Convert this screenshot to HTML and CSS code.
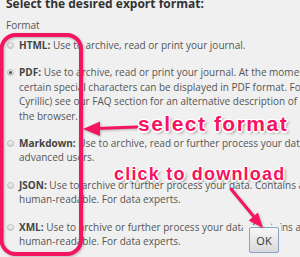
FILE: index.html
```html
<!DOCTYPE html>
<html lang="en">

<head>
      <meta charset="UTF-8">
      <meta name="viewport" content="width=device-width, initial-scale=1.0">
      <title>Export</title>
      <link rel="stylesheet" href="styles.css">
</head>

<body>
      <div id="dialog">
            <h2 class="title">Select the desired export format:</h2>
            <p class="label">Format</p>
            <div class="option">
                  <span class="radio"></span>
                  <p class="desc"><b>HTML:</b> Use to archive, read or print your journal.</p>
            </div>
            <div class="option">
                  <span class="radio checked"></span>
                  <p class="desc"><b>PDF:</b> Use to archive, read or print your journal. At the moment not all<br>
                        certain special characters can be displayed in PDF format. For these (e.g.<br>
                        Cyrillic) see our FAQ section for an alternative description of printing from<br>
                        the browser.</p>
            </div>
            <div class="option">
                  <span class="radio"></span>
                  <p class="desc"><b>Markdown:</b> Use to archive, read or further process your data. For<br>
                        advanced users.</p>
            </div>
            <div class="option">
                  <span class="radio"></span>
                  <p class="desc"><b>JSON:</b> Use to archive or further process your data. Contains all data, not<br>
                        human-readable. For data experts.</p>
            </div>
            <div class="option">
                  <span class="radio"></span>
                  <p class="desc"><b>XML:</b> Use to archive or further process your data. Contains all data, not<br>
                        human-readable. For data experts.</p>
            </div>
      </div>

      <div class="button-pane">
            <button class="ok">OK</button>
      </div>

      <!-- annotations drawn on top of the screenshot -->
      <svg class="marks" width="300" height="257" viewBox="0 0 300 257">
            <rect x="1.5" y="35" width="79.5" height="219" rx="14" ry="14" fill="none" stroke="#f5145f" stroke-width="4"/>
            <line x1="137" y1="127" x2="96" y2="128.5" stroke="#f5145f" stroke-width="3" stroke-linecap="round"/>
            <polygon points="83,129 100,121.5 100,136" fill="#f5145f"/>
            <line x1="231" y1="189" x2="255" y2="218" stroke="#f5145f" stroke-width="3" stroke-linecap="round"/>
            <polygon points="263,228 248.7,220.4 257.9,212.6" fill="#f5145f"/>
      </svg>
      <div class="note note-select">select format</div>
      <div class="note note-download">click to download</div>
</body>

</html>
```

FILE: styles.css
```css
* {
      box-sizing: border-box;
      font-family: "Open Sans", "Liberation Sans", sans-serif;
}

body {
      margin: 0;
      padding: 0;
      width: 300px;
      height: 257px;
      overflow: hidden;
      position: relative;
      background-color: #f0f0f0;
}

#dialog {
      padding-left: 6px;
      white-space: nowrap;
}

.title {
      margin: -3px 0 0 0;
      font-size: 12px;
      line-height: 14px;
      font-weight: bold;
      color: #333;
}

.label {
      margin: 7px 0 6px 0;
      font-size: 10px;
      line-height: 14px;
      color: #555;
}

.option {
      display: flex;
      align-items: flex-start;
      gap: 5px;
      padding-left: 1px;
      margin-bottom: 13px;
}

.radio {
      flex: none;
      width: 7px;
      height: 7px;
      margin-top: 4px;
      border-radius: 50%;
      border: 1px solid #b8b8b8;
      background: linear-gradient(#f4f4f4, #d6d6d6);
      display: flex;
      justify-content: center;
      align-items: center;
}

.radio.checked::after {
      content: "";
      width: 3px;
      height: 3px;
      border-radius: 50%;
      background-color: #555;
}

.desc {
      margin: 0;
      font-size: 10px;
      line-height: 14.4px;
      color: #555;
}

.desc b {
      color: #444;
}

.button-pane {
      position: absolute;
      left: 243px;
      top: 225px;
      width: 38px;
      height: 32px;
      padding: 2px 0 0 6px;
      background-color: #f0f0f0;
}

.ok {
      width: 30px;
      height: 26px;
      padding: 0;
      border: 1px solid #86a3c4;
      border-radius: 2px;
      background: linear-gradient(#f7f7f7, #d9d9d9);
      color: #333;
      font-size: 11px;
}

.marks {
      position: absolute;
      left: 0;
      top: 0;
      filter: drop-shadow(1px 1px 1px rgba(0, 0, 0, 0.25));
}

.note {
      position: absolute;
      font-family: "Liberation Sans", Arial, sans-serif;
      font-weight: bold;
      color: #f5145f;
      white-space: nowrap;
      text-shadow:
            -1px -1px 0 #fff, 1px -1px 0 #fff, -1px 1px 0 #fff, 1px 1px 0 #fff,
            0 -1.5px 0 #fff, 0 1.5px 0 #fff, -1.5px 0 0 #fff, 1.5px 0 0 #fff,
            2px 2px 3px rgba(0, 0, 0, 0.45);
}

.note-select {
      left: 138px;
      top: 112px;
      font-size: 21px;
      line-height: 24px;
      letter-spacing: 1.5px;
}

.note-download {
      left: 114px;
      top: 164px;
      font-size: 18px;
      line-height: 21px;
      letter-spacing: 1.2px;
}
```
